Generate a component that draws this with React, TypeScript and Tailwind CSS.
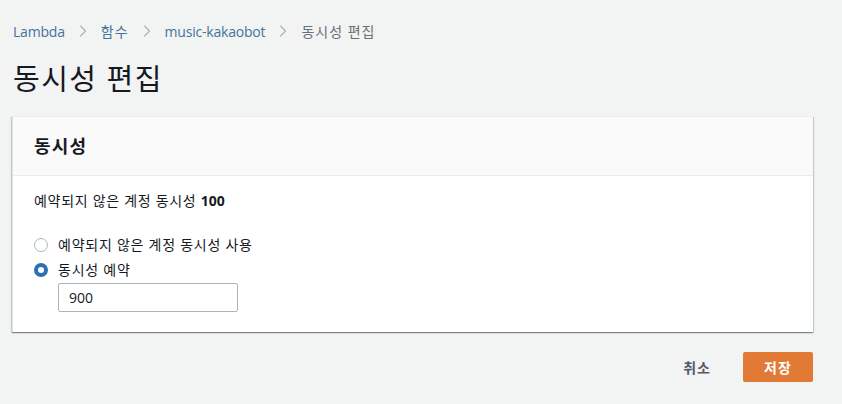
import { ChevronRight } from "lucide-react";

const font = "font-['Open_Sans','Noto_Sans_CJK_KR',sans-serif]";

function Crumb({ label, last, ko }: { label: string; last?: boolean; ko?: boolean }) {
  return (
    <li className="flex items-center">
      <span className={`${last ? "text-[#687078]" : "text-[#44739c]"} ${ko ? "tracking-[1px]" : "tracking-[-0.2px]"}`}>
        {label}
      </span>
      {!last && <ChevronRight size={20} strokeWidth={1.5} className="mx-[8px] text-[#aab7b8]" />}
    </li>
  );
}

function Radio({ checked, label }: { checked?: boolean; label: string }) {
  return (
    <label className="flex items-center gap-[10px] h-[25px]">
      <span
        className={
          checked
            ? "w-[14px] h-[14px] rounded-full border-[4px] border-[#2e6fb3] bg-white"
            : "w-[14px] h-[14px] rounded-full border border-[#aab7b8] bg-white"
        }
      />
      <span className="text-[#16191f] tracking-[0.75px]">{label}</span>
    </label>
  );
}

export default function App() {
  return (
    <main className={`${font} min-h-screen w-[842px] h-[404px] bg-[#f2f3f3] text-[14px] pl-[12px] pr-[29px] pt-[18px]`}>
      <ol className="flex items-center h-[26px] pl-[1px]">
        <Crumb label="Lambda" />
        <Crumb label="함수" ko />
        <Crumb label="music-kakaobot" />
        <Crumb label="동시성 편집" last ko />
      </ol>

      <h1 className="text-[29px] leading-[40px] tracking-[1.5px] text-[#16191f] mt-[15px] pl-[1px]">동시성 편집</h1>

      <section className="mt-[17px] bg-white border-l border-[#e1e4e4] shadow-[0_1px_1px_0_rgba(0,28,36,0.3),1px_1px_1px_0_rgba(0,28,36,0.15),-1px_1px_1px_0_rgba(0,28,36,0.15)]">
        <header className="h-[60px] bg-[#fafafa] border-t border-b border-[#eaeded] flex items-center px-[21px]">
          <h2 className="text-[18px] font-bold tracking-[1.2px] text-[#16191f]">동시성</h2>
        </header>
        <div className="px-[21px] pt-[14px] pb-[20px]">
          <p className="text-[#16191f] h-[22px] tracking-[0.7px]">
            예약되지 않은 계정 동시성 <span className="font-bold tracking-normal">100</span>
          </p>
          <div className="mt-[20px] flex flex-col">
            <Radio label="예약되지 않은 계정 동시성 사용" />
            <Radio checked label="동시성 예약" />
          </div>
          <input
            defaultValue="900"
            className="ml-[24px] mt-[1px] w-[180px] h-[29px] border border-[#aab7b8] rounded-[2px] px-[10px] text-[#16191f] outline-none"
          />
        </div>
      </section>

      <div className="flex justify-end items-center mt-[20px] gap-[32px]">
        <button className="text-[#545b64] font-bold tracking-[1px]">취소</button>
        <button className="w-[70px] h-[30px] rounded-[2px] bg-[#e07a34] text-white font-bold tracking-[1px]">저장</button>
      </div>
    </main>
  );
}
